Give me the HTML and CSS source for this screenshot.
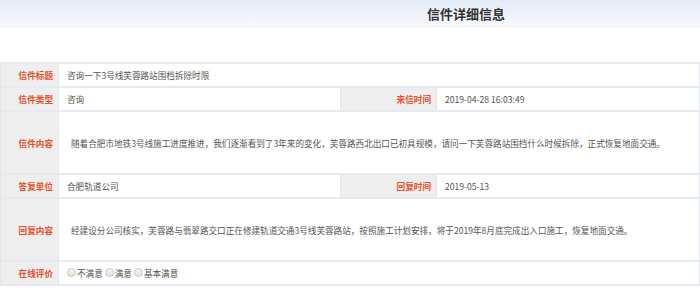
FILE: index.html
```html
<!DOCTYPE html>
<html>
  <head>
    <meta charset="utf-8" />
    <title>信件详细信息</title>
    <link rel="stylesheet" href="styles.css">
  </head>

  <body>
    <div class="letter-head">
      <h1>信件详细信息</h1>
    </div>
    <div class="letter-gap"></div>

    <table class="letter-table">
      <colgroup>
        <col class="col-label" />
        <col class="col-value" />
        <col class="col-label2" />
        <col />
      </colgroup>
      <tr class="row-short">
        <th>信件标题</th>
        <td colspan="3">咨询一下3号线芙蓉路站围档拆除时限</td>
      </tr>
      <tr class="row-short">
        <th>信件类型</th>
        <td>咨询</td>
        <th>来信时间</th>
        <td>2019-04-28 16:03:49</td>
      </tr>
      <tr class="row-tall">
        <th>信件内容</th>
        <td colspan="3" class="text">随着合肥市地铁3号线施工进度推进，我们逐渐看到了3年来的变化，芙蓉路西北出口已初具规模，请问一下芙蓉路站围挡什么时候拆除，正式恢复地面交通。</td>
      </tr>
      <tr class="row-short">
        <th>答复单位</th>
        <td>合肥轨道公司</td>
        <th>回复时间</th>
        <td>2019-05-13</td>
      </tr>
      <tr class="row-tall">
        <th>回复内容</th>
        <td colspan="3" class="text">经建设分公司核实，芙蓉路与翡翠路交口正在修建轨道交通3号线芙蓉路站，按照施工计划安排，将于2019年8月底完成出入口施工，恢复地面交通。</td>
      </tr>
      <tr class="row-short">
        <th>在线评价</th>
        <td colspan="3">
          <label class="radio"><span class="dot"></span>不满意</label>
          <label class="radio"><span class="dot"></span>满意</label>
          <label class="radio"><span class="dot"></span>基本满意</label>
        </td>
      </tr>
    </table>
  </body>
</html>
```

FILE: styles.css
```css
body {
  margin: 0;
  background: #ffffff;
  font-family: "Noto Sans CJK SC", "Microsoft YaHei", sans-serif;
  color: #555555;
}

.letter-head {
  height: 26px;
  background: linear-gradient(to bottom, #e2ebf6, #f7f9fc);
  border-bottom: 1px solid #eef2f8;
  display: flex;
  align-items: center;
  padding-left: 427px;
}

.letter-head h1 {
  margin: 0;
  font-size: 13px;
  font-weight: bold;
  color: #333333;
}

.letter-gap {
  height: 35px;
}

.letter-table {
  width: 700px;
  border-collapse: collapse;
  table-layout: fixed;
  font-size: 8.6px;
  border-top: 2px solid #e7eaf0;
}

.letter-table .col-label {
  width: 58px;
}

.letter-table .col-value {
  width: 282px;
}

.letter-table .col-label2 {
  width: 96px;
}

.letter-table th,
.letter-table td {
  border: 1px solid #dfe5ef;
  padding: 0;
  vertical-align: middle;
}

.letter-table tr {
  border-bottom: 2px solid #e4e9f2;
}

.letter-table th {
  background: #eeeeee;
  color: #e8502a;
  font-weight: 600;
  text-align: right;
  padding-right: 5px;
}

.letter-table td {
  background: #ffffff;
  padding-left: 8px;
  white-space: nowrap;
}

.letter-table td.text {
  padding-left: 12px;
}

.row-short th,
.row-short td {
  height: 22px;
}

.row-tall th,
.row-tall td {
  height: 61px;
}

.radio {
  display: inline-flex;
  align-items: center;
  color: #555555;
}

.radio .dot {
  width: 7px;
  height: 7px;
  border-radius: 50%;
  border: 1px solid #c9c9c9;
  background: linear-gradient(to bottom, #f6f6f6, #e0e0e0);
  margin-right: 1px;
}
```
